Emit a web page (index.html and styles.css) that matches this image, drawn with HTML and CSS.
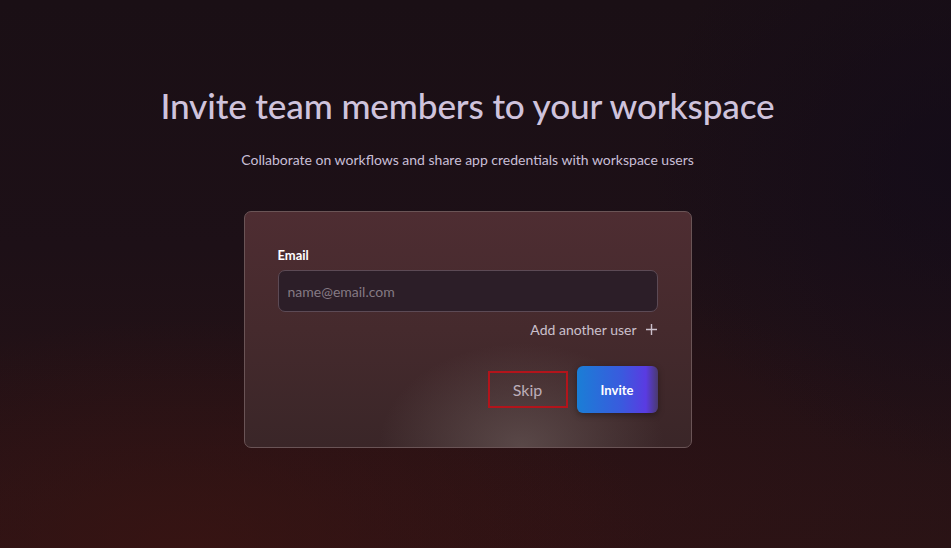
FILE: index.html
```html
<!DOCTYPE html>
<html lang="en">
<head>
    <meta charset="UTF-8">
    <meta name="viewport" content="width=device-width, initial-scale=1.0">
    <title>Invite team members</title>
    <link rel="stylesheet" href="styles.css">
</head>
<body>
    <div class="page">
        <!-- Heading -->
        <h1>Invite team members to your workspace</h1>
        <p class="subtitle">Collaborate on workflows and share app credentials with workspace users</p>

        <!-- Invite card -->
        <form class="card" id="inviteForm">
            <label for="email">Email</label>
            <input type="email" id="email" name="email" placeholder="name@email.com">

            <div class="add-row">
                <button type="button" class="add-user">
                    Add another user
                    <svg width="13" height="13" viewBox="0 0 13 13">
                        <path d="M6.5 1v11M1 6.5h11" stroke="currentColor" stroke-width="1.4" fill="none"/>
                    </svg>
                </button>
            </div>

            <div class="actions">
                <button type="button" class="skip">Skip</button>
                <button type="submit" class="invite">Invite</button>
            </div>
        </form>
    </div>
</body>
</html>
```

FILE: styles.css
```css
body {
    margin: 0;
    min-height: 100vh;
    font-family: "Lato", "Open Sans", sans-serif;
    background:
        radial-gradient(ellipse 70% 60% at 20% 100%, rgba(60, 20, 18, 0.7), transparent 70%),
        radial-gradient(ellipse 60% 60% at 60% 95%, rgba(50, 18, 20, 0.5), transparent 70%),
        radial-gradient(ellipse 40% 70% at 100% 30%, rgba(16, 10, 26, 0.6), transparent 80%),
        linear-gradient(180deg, #1a0f15 0%, #1d1017 45%, #2a1315 100%);
    color: #d8cce0;
}
.page {
    display: flex;
    flex-direction: column;
    align-items: center;
    padding: 84px 16px 0 0;
}
h1 {
    margin: 0;
    font-size: 35.2px;
    font-weight: 500;
    letter-spacing: -0.15px;
    color: #cfc3dc;
}
.subtitle {
    margin: 25px 0 0;
    font-size: 14px;
    color: #c9bfd6;
}
.card {
    box-sizing: border-box;
    width: 448px;
    height: 237px;
    margin-top: 43px;
    padding: 35px 33px 0 33px;
    border: 1px solid #6a5456;
    border-radius: 7px;
    background:
        radial-gradient(ellipse 40% 55% at 62% 100%, rgba(115, 100, 98, 0.55), transparent 80%),
        linear-gradient(180deg, #4e2d32 0%, #452a2d 50%, #3a2628 100%);
    display: flex;
    flex-direction: column;
}
label {
    font-size: 13px;
    font-weight: 700;
    color: #ffffff;
    margin-bottom: 7px;
}
input {
    box-sizing: border-box;
    height: 42px;
    padding: 0 9px;
    font-family: inherit;
    font-size: 14px;
    color: #e8e0ea;
    background: #2c1e28;
    border: 1px solid #5c4a55;
    border-radius: 7px;
    outline: none;
}
input::placeholder {
    color: #857a84;
}
.add-row {
    display: flex;
    justify-content: flex-end;
    margin-top: 9px;
}
.add-user {
    display: flex;
    align-items: center;
    gap: 8px;
    padding: 0;
    font-family: inherit;
    font-size: 14px;
    color: #cbc0cc;
    background: none;
    border: none;
    cursor: pointer;
}
.actions {
    display: flex;
    justify-content: flex-end;
    align-items: center;
    gap: 9px;
    margin-top: 28px;
}
.skip {
    box-sizing: border-box;
    width: 80px;
    height: 37px;
    font-family: inherit;
    font-size: 16px;
    color: #bcaeb9;
    background: transparent;
    border: 2px solid #b3141b;
    cursor: pointer;
}
.invite {
    box-sizing: border-box;
    width: 81px;
    height: 47px;
    font-family: inherit;
    font-size: 13px;
    font-weight: 700;
    color: #ffffff;
    border: none;
    border-radius: 6px;
    background: linear-gradient(90deg, #1a7ed6 0%, #3a5ade 55%, #5a3be2 85%, #4a3a70 100%);
    box-shadow: 0 2px 6px rgba(0, 0, 0, 0.35);
    cursor: pointer;
}
```
